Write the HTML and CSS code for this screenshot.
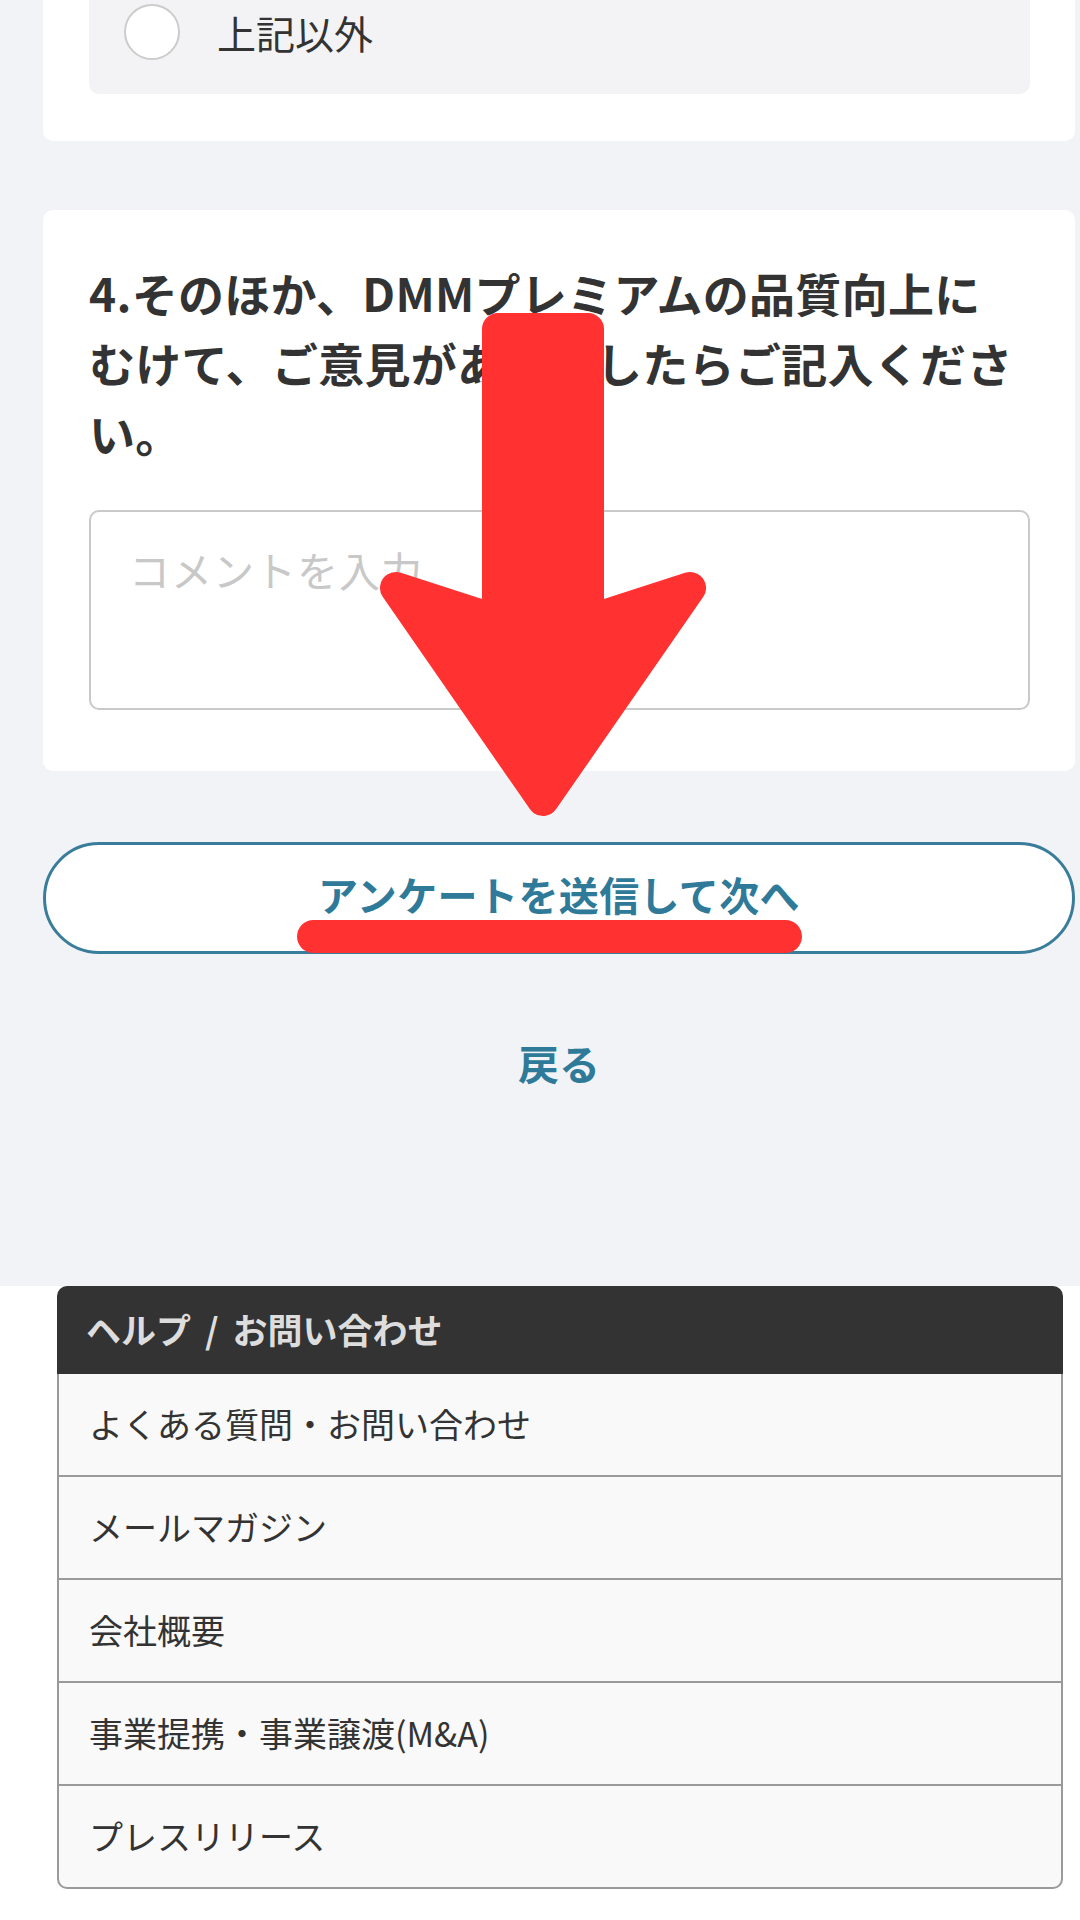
FILE: index.html
```html
<!DOCTYPE html>
<html lang="ja">
<head>
<meta charset="utf-8">
<title>アンケート</title>
<link rel="stylesheet" href="styles.css">
</head>
<body>
<div class="page">
  <main class="survey">
    <section class="card card--prev">
      <label class="option">
        <span class="radio"></span>
        <span class="option-label">上記以外</span>
      </label>
    </section>

    <section class="card card--question">
      <h2 class="q-title">4.そのほか、DMMプレミアムの品質向上に<br>むけて、ご意見がありましたらご記入くださ<br>い。</h2>
      <textarea class="comment" placeholder="コメントを入力"></textarea>
    </section>

    <div class="actions">
      <button class="btn-submit" type="button">アンケートを送信して次へ</button>
      <a class="back" href="#">戻る</a>
    </div>
  </main>

  <footer class="site-footer">
    <div class="help">
      <div class="help-head">ヘルプ<span class="slash">/</span>お問い合わせ</div>
      <ul class="help-list">
        <li>よくある質問・お問い合わせ</li>
        <li>メールマガジン</li>
        <li>会社概要</li>
        <li>事業提携・事業譲渡(M&amp;A)</li>
        <li>プレスリリース</li>
      </ul>
    </div>
  </footer>

  <svg class="annotation" viewBox="0 0 1080 1920" width="1080" height="1920" aria-hidden="true">
    <polygon points="498,329 588,329 588,621 690,588 543,800 396,588 498,621"
             fill="#ff3131" stroke="#ff3131" stroke-width="32" stroke-linejoin="round"/>
    <rect x="297" y="920" width="505" height="33" rx="16.5" fill="#ff3131"/>
  </svg>
</div>
</body>
</html>
```

FILE: styles.css
```css
* {
  box-sizing: border-box;
}

html, body {
  margin: 0;
  padding: 0;
  background: #ffffff;
}

body {
  font-family: "Noto Sans CJK JP", "Noto Sans", sans-serif;
  color: #333333;
}

.page {
  position: relative;
  width: 1080px;
  min-height: 1920px;
  overflow: hidden;
}

/* ---------- survey area ---------- */
.survey {
  background: #f1f3f7;
  padding: 0 5px 194px 43px;
}

.card {
  background: #ffffff;
  border-radius: 10px;
  padding: 46px 45px 47px 46px;
}

.card--prev {
  margin-top: -68px;
}

.card--question {
  margin-top: 69px;
  padding: 47px 45px 61px 46px;
}

.option {
  display: flex;
  align-items: center;
  gap: 37px;
  background: #f3f3f5;
  border-radius: 10px;
  padding: 26px 30px 34px 35px;
}

.radio {
  width: 56px;
  height: 56px;
  border-radius: 50%;
  background: #ffffff;
  border: 2px solid #cccccc;
  flex: none;
}

.option-label {
  font-size: 39px;
  line-height: 56px;
  color: #333333;
}

.q-title {
  margin: 0;
  font-size: 46px;
  line-height: 70px;
  font-weight: 700;
  color: #333333;
  letter-spacing: 0.3px;
}

.comment {
  display: block;
  width: 100%;
  height: 200px;
  margin-top: 43px;
  border: 2px solid #c9c9c9;
  border-radius: 10px;
  padding: 32px 38px;
  font-family: inherit;
  font-size: 41px;
  line-height: 50px;
  letter-spacing: 1px;
  color: #333333;
  background: #ffffff;
  resize: none;
  outline: none;
}

.comment::placeholder {
  color: #c8c8c8;
}

.actions {
  display: flex;
  flex-direction: column;
  align-items: stretch;
  margin-top: 71px;
}

.btn-submit {
  height: 112px;
  width: 100%;
  border: 3px solid #3a7d9b;
  border-radius: 56px;
  background: #ffffff;
  color: #2f7a99;
  font-family: inherit;
  font-size: 40px;
  font-weight: 700;
  letter-spacing: 0.4px;
  padding: 0 0 8px 0;
}

.back {
  display: block;
  margin-top: 78px;
  text-align: center;
  font-size: 41px;
  line-height: 60px;
  font-weight: 700;
  color: #2f7a99;
  text-decoration: none;
}

/* ---------- footer ---------- */
.site-footer {
  padding: 1px 17px 0 57px;
  margin-top: -1px;
}

.help-head {
  background: #333333;
  color: #dddddd;
  border-radius: 10px 10px 0 0;
  height: 88px;
  line-height: 86px;
  padding-left: 29px;
  font-size: 35px;
  font-weight: 700;
}

.help-head .slash {
  margin: 0 14px;
}

.help-list {
  list-style: none;
  margin: 0;
  padding: 0;
  border: 2px solid #9a9a9a;
  border-top: none;
  border-radius: 0 0 10px 10px;
  overflow: hidden;
  background: #f9f9f9;
}

.help-list li {
  height: 103px;
  line-height: 99px;
  padding-left: 30px;
  font-size: 34px;
  color: #333333;
  border-bottom: 2px solid #9a9a9a;
}

.help-list li:last-child {
  border-bottom: none;
  height: 101px;
}

/* ---------- annotation overlay ---------- */
.annotation {
  position: absolute;
  top: 0;
  left: 0;
  pointer-events: none;
}
```
